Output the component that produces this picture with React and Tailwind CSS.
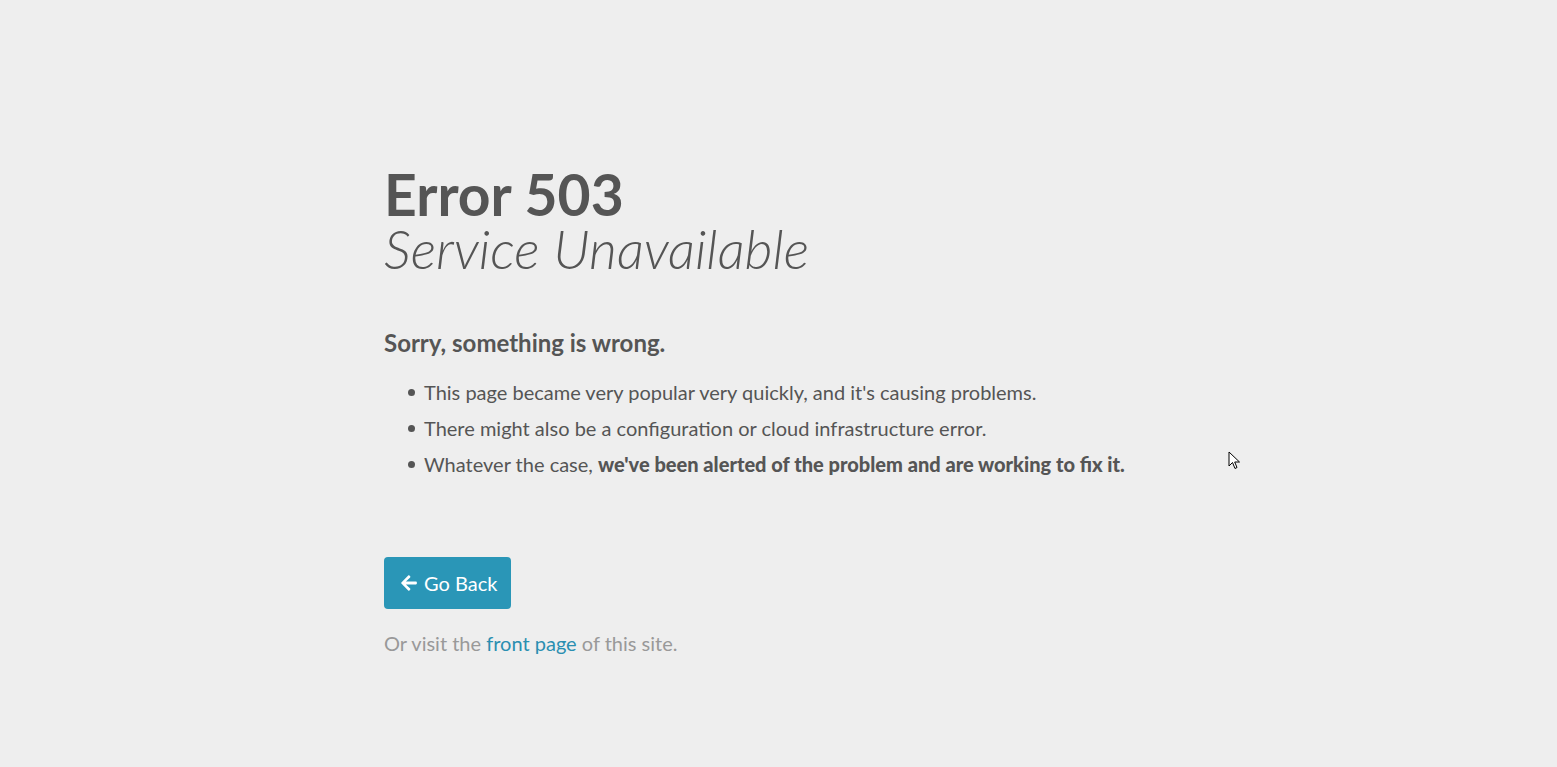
import React from 'react';

const ArrowLeft = () => (
  <svg viewBox="0 0 448 512" className="w-[18px] h-[18px] fill-current">
    <path d="M257.5 445.1l-22.2 22.2c-9.4 9.4-24.6 9.4-33.9 0L7 273c-9.4-9.4-9.4-24.6 0-33.9L201.4 44.7c9.4-9.4 24.6-9.4 33.9 0l22.2 22.2c9.5 9.5 9.3 25-.4 34.3L136.6 216H424c13.3 0 24 10.7 24 24v32c0 13.3-10.7 24-24 24H136.6l120.5 114.8c9.8 9.3 10 24.8.4 34.3z" />
  </svg>
);

const Cursor = () => (
  <svg viewBox="0 0 14 20" className="absolute left-[1228px] top-[451px] w-[14px] h-[20px]">
    <path d="M1 1 L1 15 L4.5 11.5 L7 17.5 L9 16.5 L6.7 11 L11.5 11 Z" fill="#fff" stroke="#000" strokeWidth="1" strokeLinejoin="round" />
  </svg>
);

export default function App() {
  return (
    <div className="relative min-h-[767px] bg-[#eeeeee] text-[#555555]" style={{ fontFamily: 'Lato, "Open Sans", sans-serif' }}>
      <div className="mx-auto w-[789px] pt-[164px]">
        <h1 className="text-[57px] leading-[60px] font-bold">Error 503</h1>
        <h2 className="text-[54px] leading-[50px] font-light italic">Service Unavailable</h2>

        <h3 className="mt-[53px] text-[24px] leading-[32px] font-bold">Sorry, something is wrong.</h3>
        <ul className="mt-[19px] pl-[24px] space-y-[8px] text-[20px] leading-[28px]">
          <li className="flex items-center gap-[9px]">
            <span className="w-[7px] h-[7px] rounded-full bg-[#555555]" />
            This page became very popular very quickly, and it's causing problems.
          </li>
          <li className="flex items-center gap-[9px]">
            <span className="w-[7px] h-[7px] rounded-full bg-[#555555]" />
            There might also be a configuration or cloud infrastructure error.
          </li>
          <li className="flex items-center gap-[9px]">
            <span className="w-[7px] h-[7px] rounded-full bg-[#555555]" />
            <span>
              Whatever the case, <strong className="font-black">we've been alerted of the problem and are working to fix it.</strong>
            </span>
          </li>
        </ul>

        <button className="mt-[79px] flex items-center gap-[6px] h-[52px] pl-[16px] pr-[14px] rounded-[4px] bg-[#2a96b7] text-white text-[20px]">
          <ArrowLeft />
          Go Back
        </button>

        <p className="mt-[19px] text-[20px] text-[#999999]">
          Or visit the <a href="#" className="text-[#2a8fb1]">front page</a> of this site.
        </p>
      </div>
      <Cursor />
    </div>
  );
}
